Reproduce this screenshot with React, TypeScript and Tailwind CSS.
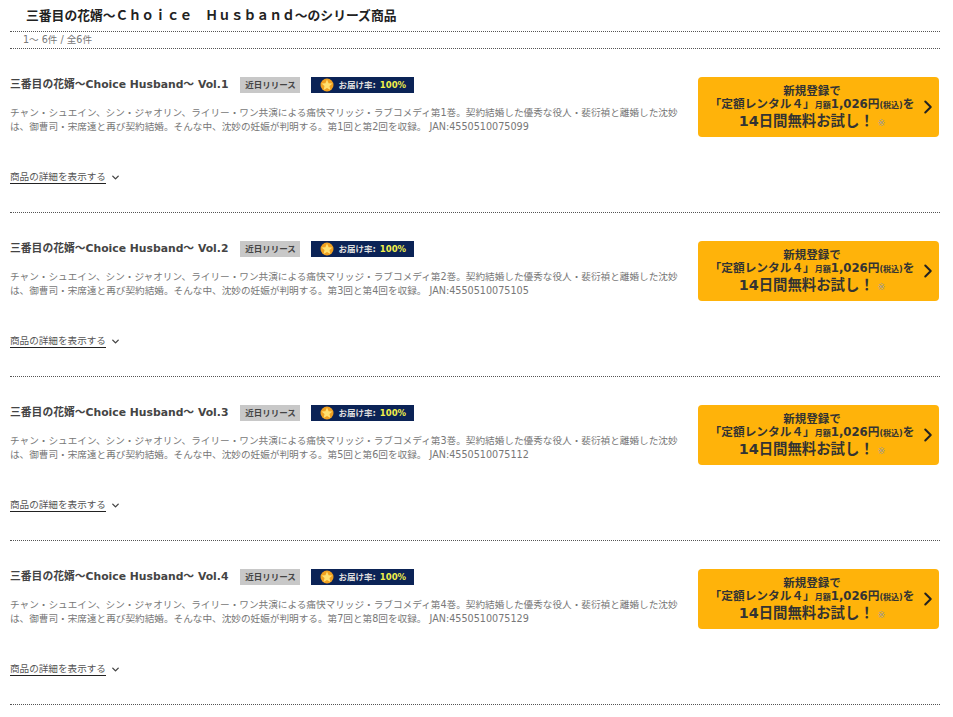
import { type FC } from 'react';
import { ChevronDown, ChevronRight } from 'lucide-react';

const font = '[font-family:"DejaVu_Sans","Noto_Sans_CJK_JP",sans-serif]';

const items = [
  { vol: 1, a: 1, b: 2, jan: '4550510075099' },
  { vol: 2, a: 3, b: 4, jan: '4550510075105' },
  { vol: 3, a: 5, b: 6, jan: '4550510075112' },
  { vol: 4, a: 7, b: 8, jan: '4550510075129' },
];

const StarIcon = () => (
  <svg width="14" height="14" viewBox="0 0 14 14" className="shrink-0">
    <circle cx="7" cy="7" r="6.5" fill="#f0a020" />
    <path d="M7 1.5 L8.6 5.2 L12.5 5.6 L9.5 8.1 L10.4 12 L7 10 L3.6 12 L4.5 8.1 L1.5 5.6 L5.4 5.2 Z" fill="#ffe070" />
  </svg>
);

const Row: FC<{ vol: number; a: number; b: number; jan: string }> = ({ vol, a, b, jan }) => (
  <div className="flex h-[164px] justify-between border-b border-dotted border-[#555]">
    <div className="w-[672px]">
      <div className="mt-[28px] flex h-4 items-center">
        <h3 className="text-[10.8px] font-bold leading-4 text-[#444]">{`三番目の花婿～Choice Husband～ Vol.${vol}`}</h3>
        <span className="ml-3 flex h-4 w-[60px] items-center justify-center bg-[#c8c8c8] text-[8.5px] font-bold text-[#444]">近日リリース</span>
        <span className="ml-[11px] flex h-4 w-[103px] items-center bg-[#0b2356] pl-[9px] text-[8.5px] font-bold text-[#ddd]">
          <StarIcon />
          <span className="ml-[4px]">お届け率:</span>
          <span className="ml-[4px] text-[#f2f04a]">100%</span>
        </span>
      </div>
      <p className="mt-[13px] w-[672px] text-[9.64px] leading-[14px] text-[#777]">
        {`チャン・シュエイン、シン・ジャオリン、ライリー・ワン共演による痛快マリッジ・ラブコメディ第${vol}巻。契約結婚した優秀な役人・裴衍禎と離婚した沈妙は、御曹司・宋席遠と再び契約結婚。そんな中、沈妙の妊娠が判明する。第${a}回と第${b}回を収録。 JAN:${jan}`}
      </p>
      <div className="mt-[36px] flex items-center">
        <a className="border-b border-[#222] text-[9.6px] leading-[13px] text-[#555]">商品の詳細を表示する</a>
        <ChevronDown className="ml-[4px] size-[11px] text-[#444]" strokeWidth={3} />
      </div>
    </div>
    <div className="mr-px mt-[28px] flex h-[60px] w-[241px] items-center rounded bg-[#ffb30a] text-[#333]">
      <div className="flex-1 pl-[9px] pt-px text-center font-bold">
        <div className="text-[11.5px] leading-[14px]">新規登録で</div>
        <div className="text-[11.7px] leading-[13px]">
          「定額レンタル４」<span className="text-[8px]">月額</span>1,026円<span className="text-[8px]">(税込)</span>を
        </div>
        <div className="text-[14.4px] leading-[18px]">
          14日間無料お試し！<span className="ml-1 text-[9px] font-normal text-[#999]">※</span>
        </div>
      </div>
      <ChevronRight className="size-[22px] text-[#222]" strokeWidth={2.2} />
    </div>
  </div>
);

export default function App() {
  return (
    <div className={`h-[717px] w-[953px] overflow-hidden bg-white ${font}`}>
      <div className="ml-[10px] w-[930px]">
        <h2 className="h-[32px] border-b border-dotted border-[#555] pl-4 pt-2 text-[12.8px] font-bold leading-4 text-[#222]">
          三番目の花婿～Ｃｈｏｉｃｅ　Ｈｕｓｂａｎｄ～のシリーズ商品
        </h2>
        <div className="h-[17px] border-b border-dotted border-[#555] pl-[13px] text-[9.6px] leading-4 text-[#777]">1～ 6件 / 全6件</div>
        {items.map((item) => (
          <Row key={item.vol} {...item} />
        ))}
      </div>
    </div>
  );
}
